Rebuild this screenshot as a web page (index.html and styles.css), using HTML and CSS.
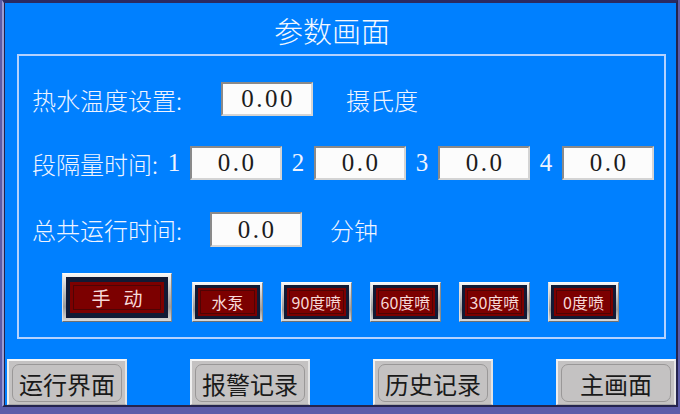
FILE: index.html
```html
<!DOCTYPE html>
<html lang="zh-CN">
<head>
<meta charset="utf-8">
<title>参数画面</title>
<link rel="stylesheet" href="styles.css">
</head>
<body>
<div class="frame">
  <div class="screen">
    <div class="title">参数画面</div>
    <div class="panel">
      <div class="row row1">
        <span class="label label1">热水温度设置:</span>
        <span class="box">0.00</span>
        <span class="unit unit1">摄氏度</span>
      </div>
      <div class="row row2">
        <span class="label label2">段隔量时间:</span>
        <span class="idx">1</span><span class="box">0.0</span>
        <span class="idx">2</span><span class="box">0.0</span>
        <span class="idx">3</span><span class="box">0.0</span>
        <span class="idx">4</span><span class="box">0.0</span>
      </div>
      <div class="row row3">
        <span class="label label3">总共运行时间:</span>
        <span class="box box3">0.0</span>
        <span class="unit unit3">分钟</span>
      </div>
      <div class="btnrow">
        <div class="hb hb-big"><div class="hb-navy"><div class="hb-face"><span class="hb-line">手动</span></div></div></div>
        <div class="hb hb-small"><div class="hb-navy"><div class="hb-face"><span class="hb-line">水泵</span></div></div></div>
        <div class="hb hb-small"><div class="hb-navy"><div class="hb-face"><span class="hb-line">90度喷</span></div></div></div>
        <div class="hb hb-small"><div class="hb-navy"><div class="hb-face"><span class="hb-line">60度喷</span></div></div></div>
        <div class="hb hb-small"><div class="hb-navy"><div class="hb-face"><span class="hb-line">30度喷</span></div></div></div>
        <div class="hb hb-small"><div class="hb-navy"><div class="hb-face"><span class="hb-line">0度喷</span></div></div></div>
      </div>
    </div>
    <div class="navrow">
      <div class="nav"><span class="nav-in">运行界面</span></div>
      <div class="nav"><span class="nav-in">报警记录</span></div>
      <div class="nav"><span class="nav-in">历史记录</span></div>
      <div class="nav"><span class="nav-in">主画面</span></div>
    </div>
  </div>
</div>
</body>
</html>
```

FILE: styles.css
```css
html, body {
  margin: 0;
  padding: 0;
}
body {
  width: 680px;
  height: 414px;
  overflow: hidden;
  background: #5c5ca8;
  font-family: "Noto Sans CJK SC", "Noto Sans", sans-serif;
}
.frame {
  width: 680px;
  height: 414px;
  box-sizing: border-box;
  padding: 0 2px 7px 2px;
  background: #5c5ca8;
}
.screen {
  height: 100%;
  box-sizing: border-box;
  border-top: 3px solid #2a2a62;
  border-left: 2px solid #9c9cd2;
  border-right: 2px solid #24244e;
  border-bottom: 2px solid #24244e;
  box-shadow: inset 1px 0 0 #22224c;
  background: #0080ff;
  display: flex;
  flex-direction: column;
}
.title {
  height: 51px;
  box-sizing: border-box;
  padding-top: 3px;
  padding-right: 16px;
  line-height: 48px;
  text-align: center;
  font-size: 29px;
  font-weight: 300;
  color: #f4f8ff;
}
.panel {
  margin-left: 13px;
  width: 649px;
  height: 285px;
  box-sizing: border-box;
  border: 2px solid #b4d2ff;
  padding-left: 13px;
  display: flex;
  flex-direction: column;
}
.row {
  display: flex;
  align-items: center;
  color: #f0f4ff;
  font-size: 24px;
  font-weight: 300;
}
.row1 { margin-top: 26px; height: 34px; }
.row2 { margin-top: 30px; height: 34px; }
.row3 { margin-top: 32px; height: 35px; }
.label { white-space: nowrap; }
.label1 { width: 189px; }
.label2 { width: 126px; }
.label3 { width: 178px; }
.box {
  width: 92px;
  height: 100%;
  box-sizing: border-box;
  border-top: 2px solid #8a8a8a;
  border-left: 2px solid #8a8a8a;
  border-right: 2px solid #d4d4d4;
  border-bottom: 2px solid #d4d4d4;
  background: #fcfcfc;
  color: #1c1c1c;
  font-family: "Liberation Serif", serif;
  font-size: 25px;
  letter-spacing: 2.5px;
  padding-left: 2px;
  display: flex;
  align-items: center;
  justify-content: center;
}
.idx {
  width: 32px;
  text-align: center;
  font-family: "Liberation Serif", serif;
  font-size: 25px;
}
.unit1 { margin-left: 33px; }
.unit3 { margin-left: 28px; }
.btnrow {
  margin-top: 26px;
  height: 49px;
  padding-left: 30px;
  display: flex;
  align-items: flex-end;
}
.hb {
  box-sizing: border-box;
  background: linear-gradient(#f6f6f6, #b8b8b8 45%, #9c9c9c 70%, #d8d8d8);
  border-top: 1px solid #fafafa;
  border-left: 1px solid #e0e0e0;
  border-right: 1px solid #8a8a8a;
  border-bottom: 1px solid #707070;
  display: flex;
}
.hb-big {
  width: 110px;
  height: 49px;
  padding: 3px;
}
.hb-small {
  width: 71px;
  height: 40px;
  padding: 2px;
  margin-left: 18px;
}
.hb-big + .hb-small { margin-left: 20px; }
.hb-navy {
  flex: 1;
  display: flex;
  background: #121a34;
}
.hb-big .hb-navy { padding: 5px 4px; }
.hb-small .hb-navy { padding: 3px 3px; }
.hb-face {
  flex: 1;
  display: flex;
  background: #7c0000;
}
.hb-big .hb-face { padding: 3px; }
.hb-small .hb-face { padding: 2px; }
.hb-line {
  flex: 1;
  border: 1px solid #4e0404;
  display: flex;
  align-items: center;
  justify-content: center;
  color: #f6d8d8;
  white-space: nowrap;
}
.hb-big .hb-line {
  font-size: 19px;
  letter-spacing: 13px;
  padding-left: 13px;
}
.hb-small .hb-line {
  font-size: 16px;
  font-family: "Noto Sans CJK SC", "Liberation Sans", sans-serif;
}
.navrow {
  margin-top: 20px;
  height: 46px;
  padding-left: 3px;
  display: flex;
  gap: 63px;
}
.nav {
  width: 120px;
  height: 46px;
  box-sizing: border-box;
  background: #c4c2c2;
  border-top: 2px solid #f6f6f6;
  border-left: 2px solid #eeeeee;
  border-right: 2px solid #e4e4e4;
  border-bottom: 1px solid #a8a8a8;
  padding: 3px 3px 2px 3px;
  display: flex;
}
.nav-in {
  flex: 1;
  border: 1px solid #9a9898;
  border-radius: 7px;
  display: flex;
  align-items: center;
  justify-content: center;
  font-size: 24px;
  color: #1a1a1a;
}
```
